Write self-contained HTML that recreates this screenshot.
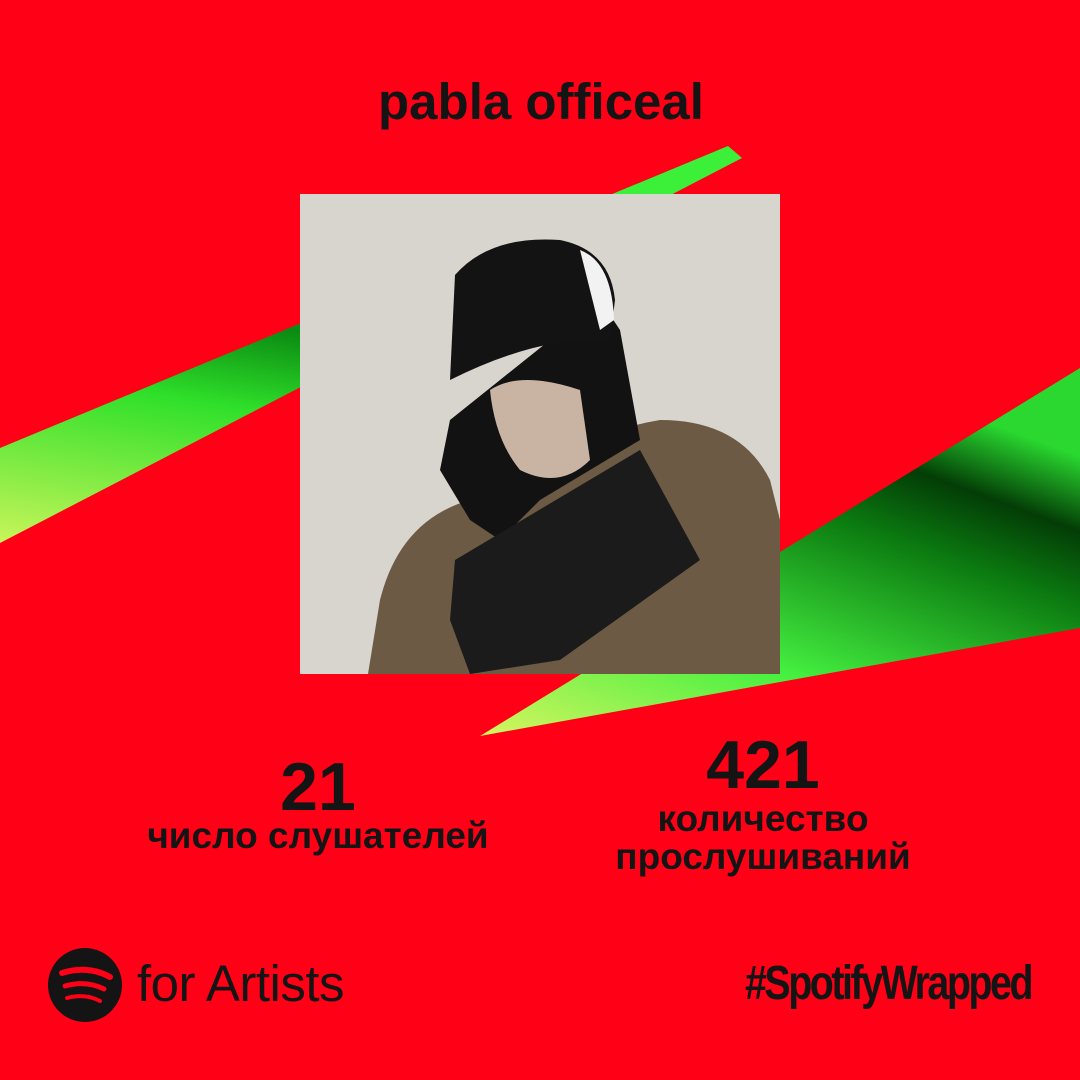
<!DOCTYPE html>
<html><head><meta charset="utf-8"><style>
html,body{margin:0;padding:0}
body{width:1080px;height:1080px;position:relative;overflow:hidden;background:#ff0016;font-family:"Liberation Sans",sans-serif;color:#141414}
.t{position:absolute;font-weight:bold;text-align:center;white-space:nowrap}
</style></head><body>
<svg width="1080" height="1080" style="position:absolute;left:0;top:0">
<defs>
<linearGradient id="g1" x1="0" y1="1" x2="0.3" y2="0">
<stop offset="0" stop-color="#c8f55a"/><stop offset="0.4" stop-color="#2fe02a"/><stop offset="0.6" stop-color="#0a8a12"/><stop offset="1" stop-color="#3cf03a"/>
</linearGradient>
<linearGradient id="g2" x1="0" y1="1" x2="0.6" y2="0">
<stop offset="0" stop-color="#d8f560"/><stop offset="0.35" stop-color="#45f040"/><stop offset="0.7" stop-color="#0b7a10"/><stop offset="0.85" stop-color="#033d06"/><stop offset="1" stop-color="#2ad830"/>
</linearGradient>
</defs>
<polygon points="0,448 728,146 742,158 0,543" fill="url(#g1)"/>
<polygon points="480,736 1080,368 1080,628" fill="url(#g2)"/>
<rect x="300" y="194" width="480" height="480" fill="#d8d5ce"/>
<path d="M368,674 L380,600 Q400,520 470,500 L520,470 Q600,430 660,420 Q740,420 770,480 L780,520 L780,674 Z" fill="#6c5a44"/>
<path d="M450,420 L440,470 L470,520 L500,540 L540,500 L640,440 L620,330 L600,300 Z" fill="#121212"/>
<path d="M455,560 L640,450 L700,560 L560,660 L470,674 L450,620 Z" fill="#1b1b1b"/>
<path d="M490,390 Q520,370 580,390 L590,460 Q560,490 520,470 Q495,440 490,390 Z" fill="#c9b4a4"/>
<path d="M455,275 Q490,235 560,240 Q610,250 615,300 L610,340 Q540,335 450,380 Z" fill="#131313"/>
<path d="M580,250 Q612,262 614,320 L600,330 Z" fill="#f2f2f2"/>
<circle cx="85" cy="985" r="37" fill="#141414"/>
<path d="M62,973 Q88,965 110,977" stroke="#ff0016" stroke-width="6" fill="none" stroke-linecap="round"/>
<path d="M65,986 Q86,980 104,989" stroke="#ff0016" stroke-width="5" fill="none" stroke-linecap="round"/>
<path d="M67,998 Q85,993 100,1001" stroke="#ff0016" stroke-width="4" fill="none" stroke-linecap="round"/>
</svg>
<div class="t" style="left:0;width:1082px;top:72px;font-size:51px">pabla officeal</div>
<div class="t" style="left:118px;width:400px;top:748px;font-size:68px">21</div>
<div class="t" style="left:118px;width:400px;top:815px;font-size:37px">число слушателей</div>
<div class="t" style="left:563px;width:400px;top:726px;font-size:68px">421</div>
<div class="t" style="left:563px;width:400px;top:800px;font-size:37px;line-height:38px">количество<br>прослушиваний</div>
<div style="position:absolute;left:137px;top:954px;font-size:51px;letter-spacing:-0.5px;white-space:nowrap">for Artists</div>
<div style="position:absolute;left:745px;top:956px;font-size:48px;font-weight:bold;letter-spacing:-3px;white-space:nowrap;transform:scaleX(0.82);transform-origin:left top">#SpotifyWrapped</div>
</body></html>
